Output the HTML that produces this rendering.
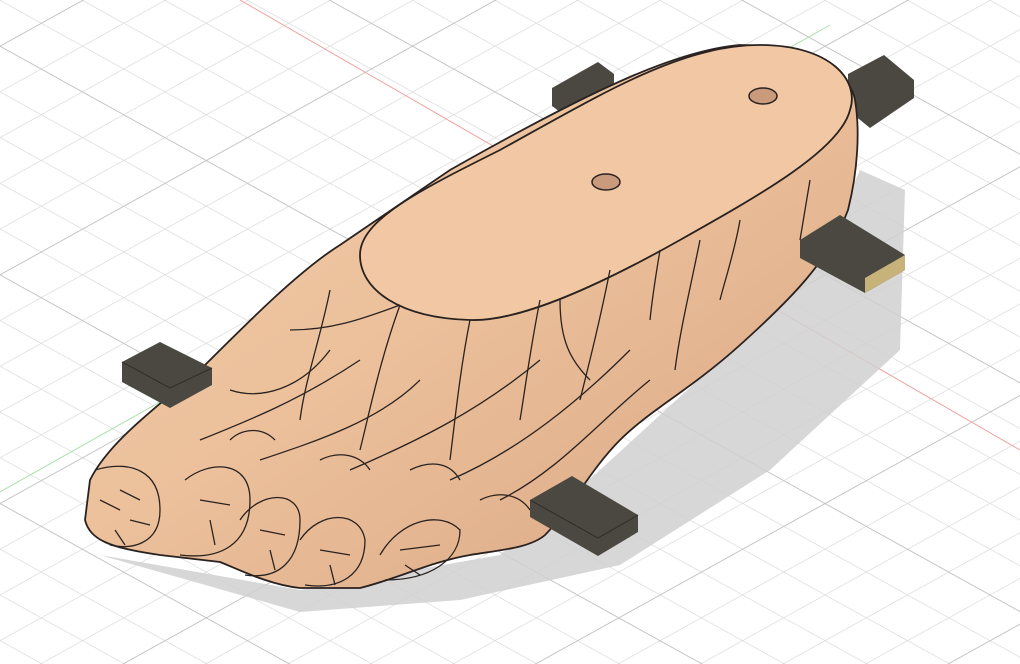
<!DOCTYPE html>
<html><head><meta charset="utf-8"><style>html,body{margin:0;padding:0;background:#fff;width:1020px;height:664px;overflow:hidden}</style></head>
<body>
<svg width="1020" height="664" viewBox="0 0 1020 664" xmlns="http://www.w3.org/2000/svg">
<defs>
<pattern id="g1" width="200" height="40" patternUnits="userSpaceOnUse" patternTransform="rotate(29)">
<line x1="0" y1="0" x2="200" y2="0" stroke="#d6d6d6" stroke-width="1.2"/>
</pattern>
<pattern id="g2" width="200" height="40" patternUnits="userSpaceOnUse" patternTransform="rotate(-29)">
<line x1="0" y1="0" x2="200" y2="0" stroke="#d6d6d6" stroke-width="1.2"/>
</pattern>
<pattern id="m1" width="200" height="200" patternUnits="userSpaceOnUse" patternTransform="rotate(29) translate(0,40)">
<line x1="0" y1="0" x2="200" y2="0" stroke="#bdbdbd" stroke-width="1.4"/>
</pattern>
<pattern id="m2" width="200" height="200" patternUnits="userSpaceOnUse" patternTransform="rotate(-29) translate(0,40)">
<line x1="0" y1="0" x2="200" y2="0" stroke="#bdbdbd" stroke-width="1.4"/>
</pattern>
<linearGradient id="skin" x1="0" y1="0" x2="1" y2="1">
<stop offset="0" stop-color="#f1cdaa"/><stop offset="0.45" stop-color="#ecc19c"/><stop offset="1" stop-color="#d9a582"/>
</linearGradient>
</defs>
<rect width="1020" height="664" fill="#fff"/>
<rect width="1020" height="664" fill="url(#g1)"/>
<rect width="1020" height="664" fill="url(#g2)"/>
<rect width="1020" height="664" fill="url(#m1)"/>
<rect width="1020" height="664" fill="url(#m2)"/>
<line x1="240" y1="0" x2="1020" y2="450" stroke="#f0a0a0" stroke-width="1"/>
<line x1="0" y1="492" x2="830" y2="25" stroke="#a8e0a8" stroke-width="1"/>
<!-- shadow -->
<path d="M100,555 L300,612 L460,600 L620,565 L770,470 L900,350 L905,190 L860,170 L820,260 L720,360 L600,470 L500,555 L300,590 Z" fill="#d0d0d0" opacity="0.85"/>
<!-- tabs behind -->
<path d="M552,88 L598,62 L614,74 L614,92 L568,118 L552,106 Z" fill="#4b4842"/>
<path d="M848,74 L884,55 L914,80 L914,98 L870,128 L848,110 Z" fill="#4b4842"/>
<!-- foot body -->
<path d="M340,245 C300,270 250,320 200,370 C160,405 110,440 90,480 L85,520 C90,540 110,548 160,555 L220,562 C240,570 270,585 300,588 L360,588 C400,578 430,562 470,555 C500,550 530,548 545,535 C570,510 590,470 620,440 C650,410 690,390 740,345 C790,300 830,260 848,210 C858,170 860,130 855,100 C850,70 800,45 740,45 C680,50 600,85 450,170 Z" fill="url(#skin)" stroke="#2a2220" stroke-width="1.8"/>
<!-- top oval -->
<path d="M360,255 C360,220 420,190 500,150 C600,95 680,45 760,45 C830,45 860,80 850,110 C840,150 760,195 680,240 C600,285 520,322 470,320 C400,318 360,290 360,255 Z" fill="#f1c8a3" stroke="#2a2220" stroke-width="1.8"/>
<ellipse cx="763" cy="96" rx="14" ry="8" fill="#c99b7c" stroke="#2a2220" stroke-width="1.5"/>
<ellipse cx="606" cy="182" rx="14" ry="8" fill="#c99b7c" stroke="#2a2220" stroke-width="1.5"/>
<!-- wire lines -->
<g fill="none" stroke="#2a2220" stroke-width="1.3">
<path d="M330,290 C320,340 305,380 300,420 M400,305 C380,360 370,410 360,450 M470,320 C460,370 455,420 450,460 M540,300 C530,350 525,390 520,420 M610,270 C600,320 590,360 580,400 M660,250 C655,280 652,300 650,320 M740,220 C735,250 725,280 720,300 M810,180 L800,240 M700,240 C690,290 680,330 675,370 M560,300 C560,340 570,360 590,380"/>
<path d="M230,390 C260,400 300,390 330,350 M260,460 C320,440 380,420 420,380 M350,470 C420,440 480,410 540,360 M450,480 C520,450 580,400 630,350 M200,440 C250,420 300,400 360,360 M500,500 C560,470 600,420 650,380 M290,330 C330,330 360,320 400,305"/>
<path d="M95,470 C130,460 160,470 160,510 C160,545 130,550 110,545"/>
<path d="M185,480 C210,460 250,460 250,500 C250,545 220,560 180,555"/>
<path d="M240,520 C260,490 300,490 300,520 C300,560 280,580 245,575"/>
<path d="M300,540 C320,510 360,510 365,540 C365,575 340,590 305,585"/>
<path d="M380,555 C400,520 440,510 460,530 C460,560 430,580 385,580"/>
<path d="M120,490 L140,500 M130,520 L150,525 M200,500 L230,505 M260,530 L285,535 M320,550 L350,555 M400,550 L440,545 M100,500 L120,510 M115,530 L125,545 M210,520 L215,545 M270,550 L275,570 M330,565 L335,585 M405,565 L420,575"/>
<path d="M230,440 C240,430 260,425 275,440 M320,460 C340,450 360,455 370,470 M410,470 C430,460 450,462 460,480 M480,500 C500,490 520,495 530,510"/>
</g>
<!-- front tabs -->
<path d="M122,362 L160,342 L212,368 L212,385 L170,408 L122,382 Z" fill="#4b4842"/>
<path d="M122,362 L170,388 L212,368" fill="none" stroke="#2f2d29"/>
<path d="M800,240 L840,215 L905,255 L905,270 L865,293 L800,258 Z" fill="#4b4842"/>
<path d="M865,278 L905,255 L905,270 L865,293 Z" fill="#c7b37a"/>
<path d="M530,500 L572,476 L638,515 L638,532 L598,556 L530,517 Z" fill="#4b4842"/>
<path d="M530,500 L598,538 L638,515" fill="none" stroke="#2f2d29"/>
</svg>
</body></html>
